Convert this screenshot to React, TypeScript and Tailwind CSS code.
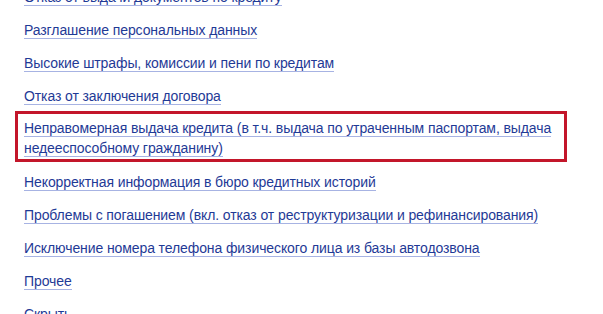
const items = [
  'Отказ от выдачи документов по кредиту',
  'Разглашение персональных данных',
  'Высокие штрафы, комиссии и пени по кредитам',
  'Отказ от заключения договора',
];

const itemsAfter = [
  'Некорректная информация в бюро кредитных историй',
  'Проблемы с погашением (вкл. отказ от реструктуризации и рефинансирования)',
  'Исключение номера телефона физического лица из базы автодозвона',
  'Прочее',
  'Скрыть',
];

function Item({ label }: { label: string }) {
  return (
    <div className="px-[9px] leading-[20px]">
      <a href="#" className="text-[#1f3a96] border-b border-[#a7b3e3]">
        {label}
      </a>
    </div>
  );
}

export default function App() {
  return (
    <div className="w-[603px] h-[314px] overflow-hidden bg-white [font-family:'Liberation_Sans',Arial,sans-serif] text-[14px] tracking-[-0.1px]">
      <div className="flex flex-col gap-[13px] pl-[15px] -mt-[13px]">
        {items.map((t) => (
          <Item key={t} label={t} />
        ))}
        <div className="w-[552px] -mt-[8px] -mb-[3px] border-[3px] border-[#c3162a] pl-[6px] pr-[2px] pt-[4px] pb-[1px] leading-[20px]">
          <a href="#" className="text-[#1f3a96] border-b border-[#a7b3e3]">
            Неправомерная выдача кредита (в т.ч. выдача по утраченным паспортам, выдача недееспособному гражданину)
          </a>
        </div>
        {itemsAfter.map((t) => (
          <Item key={t} label={t} />
        ))}
      </div>
    </div>
  );
}
